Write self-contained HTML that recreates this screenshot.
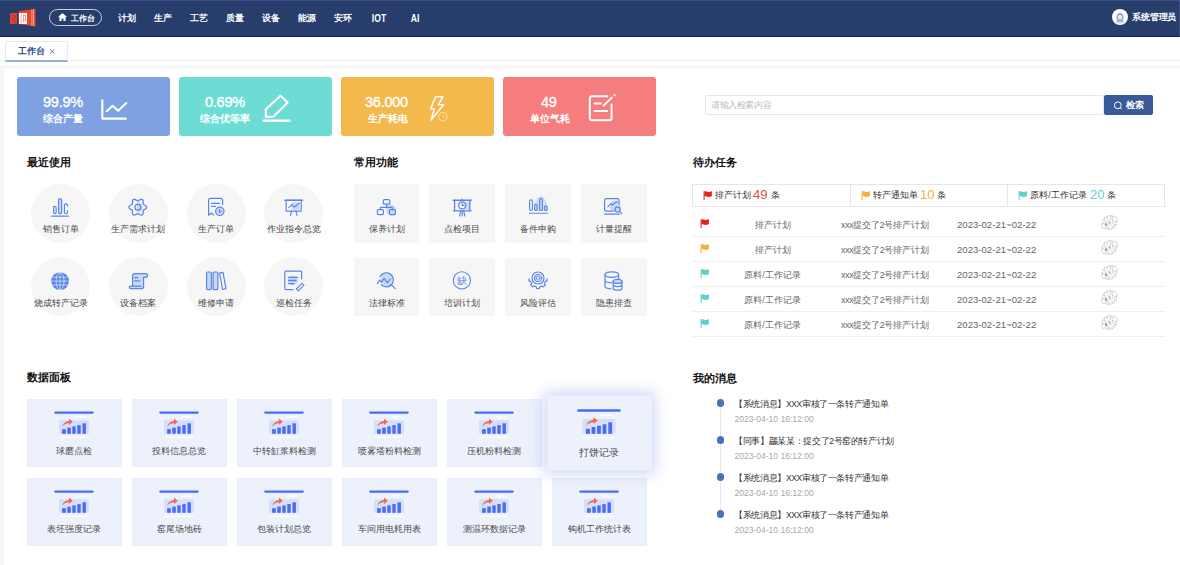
<!DOCTYPE html>
<html><head><meta charset="utf-8">
<style>
*{box-sizing:border-box;margin:0;padding:0}
html,body{width:1180px;height:565px;overflow:hidden;background:#f7f7f8;font-family:"Liberation Sans",sans-serif;color:#333}
.a{position:absolute;white-space:nowrap}
#hdr{position:absolute;left:0;top:0;width:1180px;height:37px;background:#273e6c;border-bottom:1px solid #0b1f4f;border-top:1px solid #3a5082;border-right:1px solid #3a5082}
.nav{position:absolute;top:11.2px;font-size:8.6px;font-weight:bold;color:#fff;line-height:12px;text-align:center;width:30px}
#tabs{position:absolute;left:0;top:37px;width:1180px;height:27.5px;background:#fff}
#panel{position:absolute;left:3.8px;top:68.8px;width:1180px;height:500px;background:#fff}
.stat{position:absolute;top:77px;width:153px;height:59px;border-radius:3px;color:#fff}
.stat .v{position:absolute;top:16px;font-size:14.5px;line-height:16px;-webkit-text-stroke:0.35px #fff;letter-spacing:-0.25px;transform:scaleY(1.06);transform-origin:0 0}
.stat .l{position:absolute;top:34.6px;font-size:10px;line-height:13px;font-weight:bold;margin-left:0.6px}
.h{position:absolute;font-size:11px;font-weight:bold;color:#111;line-height:14px}
.circ{position:absolute;width:59px;height:59px;border-radius:50%;background:#f6f6f6}
.sq{position:absolute;width:65.8px;height:58.6px;background:#f6f6f6}
.lbl{position:absolute;left:0;right:-20px;margin-left:-10px;top:40px;font-size:9px;line-height:11px;color:#333;text-align:center;white-space:nowrap}
.ic{position:absolute;left:50%;top:14px;transform:translateX(-50%)}
.dc{position:absolute;width:94.7px;height:68.3px;background:#edf1fc;box-shadow:inset 0 0 0 0.5px #e6ebf9}
.dc .lbl{top:47px}
.t9{position:absolute;width:100px;text-align:center;font-size:9px;line-height:11px;color:#4a4a4a;white-space:nowrap}
.hov{transform:scale(1.1);box-shadow:0 0 12px 3px rgba(100,135,230,.32);z-index:2}
</style></head><body>
<div id="hdr">
  <svg class="a" style="left:9px;top:7px" width="28" height="20" viewBox="0 0 28 20">
    <rect x="1" y="5" width="7" height="11" fill="#e3412b"/>
    <polygon points="9.5,3.3 26.5,0.8 26.5,18.4 9.5,16" fill="#e8432c"/>
    <rect x="10" y="5" width="8" height="11" fill="#fff"/><g fill="#ee6a55"><rect x="11.8" y="6" width="0.6" height="9.5"/><rect x="14" y="7.4" width="2.6" height="0.6"/><rect x="14" y="11" width="2.4" height="0.6"/><rect x="14.4" y="7.4" width="0.6" height="7"/><rect x="16.2" y="7.4" width="0.6" height="6"/></g><g fill="#2b4170" opacity="0.9"><rect x="3.6" y="7" width="1.2" height="0.9"/><rect x="5.6" y="8.6" width="1" height="1.4"/><rect x="3" y="10.4" width="1.6" height="0.9"/><rect x="4.8" y="12.4" width="1" height="1.2"/><rect x="6.4" y="13.8" width="0.8" height="1"/></g>
    <rect x="22.5" y="1.5" width="0.8" height="16.5" fill="#f7b7a8"/>
    <rect x="24.2" y="1.3" width="0.8" height="16.8" fill="#f7b7a8"/>
  </svg>
  <div class="a" style="left:49px;top:8.2px;width:53px;height:17px;border:1.5px solid #c9d0de;border-radius:9px"></div>
  <svg class="a" style="left:58px;top:12.3px" width="9" height="8" viewBox="0 0 9 8"><path d="M4.5 0 L9 4 L7.6 4 L7.6 8 L5.4 8 L5.4 5.5 L3.6 5.5 L3.6 8 L1.4 8 L1.4 4 L0 4 Z" fill="#fff"/></svg>
  <div class="nav" style="left:67.5px;width:30px;font-size:8px;top:11.5px">工作台</div>
  <div class="nav" style="left:112px">计划</div>
  <div class="nav" style="left:148px">生产</div>
  <div class="nav" style="left:184px">工艺</div>
  <div class="nav" style="left:220px">质量</div>
  <div class="nav" style="left:256px">设备</div>
  <div class="nav" style="left:292px">能源</div>
  <div class="nav" style="left:328px">安环</div>
  <div class="nav" style="left:364px;top:12.2px;transform:scaleY(1.22);transform-origin:50% 75%">IOT</div>
  <div class="nav" style="left:400px;top:12.2px;transform:scaleY(1.22);transform-origin:50% 75%">AI</div>
  <svg class="a" style="left:1112px;top:8px" width="16" height="16" viewBox="0 0 16 16"><circle cx="8" cy="8" r="8" fill="#fff"/><path d="M4.6 13.6 Q4.2 6.6 5 5 Q8 2 11 5 Q11.8 6.6 11.4 13.6 Z" fill="#7cc0ee"/><circle cx="8" cy="8.2" r="2.6" fill="#f6e7dc" stroke="#8a7b72" stroke-width="0.5"/><path d="M5 15 Q8 11.2 11 15" fill="#d9ecfa"/></svg>
  <div class="a" style="left:1132.3px;top:10.2px;letter-spacing:-0.25px;font-size:8.6px;line-height:12px;color:#fff;font-weight:bold">系统管理员</div>
</div>
<div id="tabs">
  <div class="a" style="left:0;top:23.3px;width:1180px;height:1px;background:#ececec"></div><div class="a" style="left:5px;top:4px;width:63px;height:21px;border:1px solid #e6e9ef;border-bottom:2px solid #8fb0df;border-radius:2px 2px 0 0;background:#fff"></div>
  <div class="a" style="left:18px;top:9px;font-size:9px;line-height:11px;color:#1f4e8c;font-weight:bold">工作台</div>
  <svg class="a" style="left:49px;top:10.6px" width="7" height="7" viewBox="0 0 7 7"><path d="M1 1.2 L5.6 5.6 M5.6 1.2 L1 5.6" stroke="#4a6a9a" stroke-width="0.85"/></svg>
</div>
<div id="panel"></div>
<div class="stat" style="left:17px;background:#7ea1e2"><div class="v" style="left:26px">99.9%</div><div class="l" style="left:25px">综合产量</div></div>
<div class="stat" style="left:179px;background:#6cdcd4"><div class="v" style="left:26px">0.69%</div><div class="l" style="left:20px">综合优等率</div></div>
<div class="stat" style="left:341px;background:#f4b94c"><div class="v" style="left:24px">36.000</div><div class="l" style="left:26px">生产耗电</div></div>
<div class="stat" style="left:503px;background:#f57d7d"><div class="v" style="left:38px">49</div><div class="l" style="left:26px">单位气耗</div></div>

<div class="circ" style="left:31.25px;top:183.95px"></div>
<div class="t9" style="left:10.50px;top:224.3px">销售订单</div>
<div class="circ" style="left:108.95px;top:183.95px"></div>
<div class="t9" style="left:88.20px;top:224.3px">生产需求计划</div>
<div class="circ" style="left:186.55px;top:183.95px"></div>
<div class="t9" style="left:165.80px;top:224.3px">生产订单</div>
<div class="circ" style="left:264.25px;top:183.95px"></div>
<div class="t9" style="left:243.50px;top:224.3px">作业指令总览</div>
<div class="circ" style="left:31.25px;top:257.45px"></div>
<div class="t9" style="left:10.50px;top:297.5px">烧成转产记录</div>
<div class="circ" style="left:108.95px;top:257.45px"></div>
<div class="t9" style="left:88.20px;top:297.5px">设备档案</div>
<div class="circ" style="left:186.55px;top:257.45px"></div>
<div class="t9" style="left:165.80px;top:297.5px">维修申请</div>
<div class="circ" style="left:264.25px;top:257.45px"></div>
<div class="t9" style="left:243.50px;top:297.5px">巡检任务</div>
<div class="sq" style="left:353.6px;top:184px"></div>
<div class="t9" style="left:336.50px;top:224.3px">保养计划</div>
<div class="sq" style="left:429.3px;top:184px"></div>
<div class="t9" style="left:412.10px;top:224.3px">点检项目</div>
<div class="sq" style="left:505px;top:184px"></div>
<div class="t9" style="left:487.70px;top:224.3px">备件申购</div>
<div class="sq" style="left:581.2px;top:184px"></div>
<div class="t9" style="left:564.3px;top:224.3px">计量提醒</div>
<div class="sq" style="left:353.6px;top:257.6px"></div>
<div class="t9" style="left:336.50px;top:297.5px">法律标准</div>
<div class="sq" style="left:429.3px;top:257.6px"></div>
<div class="t9" style="left:412.10px;top:297.5px">培训计划</div>
<div class="sq" style="left:505px;top:257.6px"></div>
<div class="t9" style="left:487.70px;top:297.5px">风险评估</div>
<div class="sq" style="left:581.2px;top:257.6px"></div>
<div class="t9" style="left:564.3px;top:297.5px">隐患排查</div>
<div class="dc" style="left:27px;top:399px"><svg style="position:absolute;left:0;top:0" width="95" height="69" viewBox="0 0 95 69"><path d="M28.3 13.6 H65.7" stroke="#4a6cf0" stroke-width="2.2" stroke-linecap="round"/><path d="M49 18 H59.6" stroke="#fff" stroke-width="1.2"/><rect x="32" y="21.2" width="30" height="13.6" rx="1" fill="#d5dffb"/><g fill="#4a6cf0"><rect x="35.1" y="30.2" width="3.7" height="4.6"/><rect x="40.3" y="28.6" width="3.5" height="6.2"/><rect x="45.3" y="27.4" width="3.4" height="7.4"/><rect x="50.3" y="26.1" width="3.4" height="8.7"/><rect x="55.5" y="24.3" width="3.4" height="10.5"/></g><path d="M35.2 27.6 Q36.8 22.6 42 22 L42 19.4 L45.8 22.7 L42 25.9 L42 24.2 Q38 24.2 35.2 27.6 Z" fill="#f26b50"/><path d="M32.9 38.2 H60.8" stroke="#fff" stroke-width="1.3"/></svg><div class="t9" style="left:-3px;top:46.5px;width:100px">球磨点检</div></div>
<div class="dc" style="left:132px;top:399px"><svg style="position:absolute;left:0;top:0" width="95" height="69" viewBox="0 0 95 69"><path d="M28.3 13.6 H65.7" stroke="#4a6cf0" stroke-width="2.2" stroke-linecap="round"/><path d="M49 18 H59.6" stroke="#fff" stroke-width="1.2"/><rect x="32" y="21.2" width="30" height="13.6" rx="1" fill="#d5dffb"/><g fill="#4a6cf0"><rect x="35.1" y="30.2" width="3.7" height="4.6"/><rect x="40.3" y="28.6" width="3.5" height="6.2"/><rect x="45.3" y="27.4" width="3.4" height="7.4"/><rect x="50.3" y="26.1" width="3.4" height="8.7"/><rect x="55.5" y="24.3" width="3.4" height="10.5"/></g><path d="M35.2 27.6 Q36.8 22.6 42 22 L42 19.4 L45.8 22.7 L42 25.9 L42 24.2 Q38 24.2 35.2 27.6 Z" fill="#f26b50"/><path d="M32.9 38.2 H60.8" stroke="#fff" stroke-width="1.3"/></svg><div class="t9" style="left:-3px;top:46.5px;width:100px">投料信息总览</div></div>
<div class="dc" style="left:237px;top:399px"><svg style="position:absolute;left:0;top:0" width="95" height="69" viewBox="0 0 95 69"><path d="M28.3 13.6 H65.7" stroke="#4a6cf0" stroke-width="2.2" stroke-linecap="round"/><path d="M49 18 H59.6" stroke="#fff" stroke-width="1.2"/><rect x="32" y="21.2" width="30" height="13.6" rx="1" fill="#d5dffb"/><g fill="#4a6cf0"><rect x="35.1" y="30.2" width="3.7" height="4.6"/><rect x="40.3" y="28.6" width="3.5" height="6.2"/><rect x="45.3" y="27.4" width="3.4" height="7.4"/><rect x="50.3" y="26.1" width="3.4" height="8.7"/><rect x="55.5" y="24.3" width="3.4" height="10.5"/></g><path d="M35.2 27.6 Q36.8 22.6 42 22 L42 19.4 L45.8 22.7 L42 25.9 L42 24.2 Q38 24.2 35.2 27.6 Z" fill="#f26b50"/><path d="M32.9 38.2 H60.8" stroke="#fff" stroke-width="1.3"/></svg><div class="t9" style="left:-3px;top:46.5px;width:100px">中转缸浆料检测</div></div>
<div class="dc" style="left:342px;top:399px"><svg style="position:absolute;left:0;top:0" width="95" height="69" viewBox="0 0 95 69"><path d="M28.3 13.6 H65.7" stroke="#4a6cf0" stroke-width="2.2" stroke-linecap="round"/><path d="M49 18 H59.6" stroke="#fff" stroke-width="1.2"/><rect x="32" y="21.2" width="30" height="13.6" rx="1" fill="#d5dffb"/><g fill="#4a6cf0"><rect x="35.1" y="30.2" width="3.7" height="4.6"/><rect x="40.3" y="28.6" width="3.5" height="6.2"/><rect x="45.3" y="27.4" width="3.4" height="7.4"/><rect x="50.3" y="26.1" width="3.4" height="8.7"/><rect x="55.5" y="24.3" width="3.4" height="10.5"/></g><path d="M35.2 27.6 Q36.8 22.6 42 22 L42 19.4 L45.8 22.7 L42 25.9 L42 24.2 Q38 24.2 35.2 27.6 Z" fill="#f26b50"/><path d="M32.9 38.2 H60.8" stroke="#fff" stroke-width="1.3"/></svg><div class="t9" style="left:-3px;top:46.5px;width:100px">喷雾塔粉料检测</div></div>
<div class="dc" style="left:447px;top:399px"><svg style="position:absolute;left:0;top:0" width="95" height="69" viewBox="0 0 95 69"><path d="M28.3 13.6 H65.7" stroke="#4a6cf0" stroke-width="2.2" stroke-linecap="round"/><path d="M49 18 H59.6" stroke="#fff" stroke-width="1.2"/><rect x="32" y="21.2" width="30" height="13.6" rx="1" fill="#d5dffb"/><g fill="#4a6cf0"><rect x="35.1" y="30.2" width="3.7" height="4.6"/><rect x="40.3" y="28.6" width="3.5" height="6.2"/><rect x="45.3" y="27.4" width="3.4" height="7.4"/><rect x="50.3" y="26.1" width="3.4" height="8.7"/><rect x="55.5" y="24.3" width="3.4" height="10.5"/></g><path d="M35.2 27.6 Q36.8 22.6 42 22 L42 19.4 L45.8 22.7 L42 25.9 L42 24.2 Q38 24.2 35.2 27.6 Z" fill="#f26b50"/><path d="M32.9 38.2 H60.8" stroke="#fff" stroke-width="1.3"/></svg><div class="t9" style="left:-3px;top:46.5px;width:100px">压机粉料检测</div></div>
<div class="dc hov" style="left:552px;top:399px"><svg style="position:absolute;left:0;top:0" width="95" height="69" viewBox="0 0 95 69"><path d="M28.3 13.6 H65.7" stroke="#4a6cf0" stroke-width="2.2" stroke-linecap="round"/><path d="M49 18 H59.6" stroke="#fff" stroke-width="1.2"/><rect x="32" y="21.2" width="30" height="13.6" rx="1" fill="#d5dffb"/><g fill="#4a6cf0"><rect x="35.1" y="30.2" width="3.7" height="4.6"/><rect x="40.3" y="28.6" width="3.5" height="6.2"/><rect x="45.3" y="27.4" width="3.4" height="7.4"/><rect x="50.3" y="26.1" width="3.4" height="8.7"/><rect x="55.5" y="24.3" width="3.4" height="10.5"/></g><path d="M35.2 27.6 Q36.8 22.6 42 22 L42 19.4 L45.8 22.7 L42 25.9 L42 24.2 Q38 24.2 35.2 27.6 Z" fill="#f26b50"/><path d="M32.9 38.2 H60.8" stroke="#fff" stroke-width="1.3"/></svg><div class="t9" style="left:-3px;top:46.5px;width:100px">打饼记录</div></div>
<div class="dc" style="left:27px;top:477.5px"><svg style="position:absolute;left:0;top:0" width="95" height="69" viewBox="0 0 95 69"><path d="M28.3 13.6 H65.7" stroke="#4a6cf0" stroke-width="2.2" stroke-linecap="round"/><path d="M49 18 H59.6" stroke="#fff" stroke-width="1.2"/><rect x="32" y="21.2" width="30" height="13.6" rx="1" fill="#d5dffb"/><g fill="#4a6cf0"><rect x="35.1" y="30.2" width="3.7" height="4.6"/><rect x="40.3" y="28.6" width="3.5" height="6.2"/><rect x="45.3" y="27.4" width="3.4" height="7.4"/><rect x="50.3" y="26.1" width="3.4" height="8.7"/><rect x="55.5" y="24.3" width="3.4" height="10.5"/></g><path d="M35.2 27.6 Q36.8 22.6 42 22 L42 19.4 L45.8 22.7 L42 25.9 L42 24.2 Q38 24.2 35.2 27.6 Z" fill="#f26b50"/><path d="M32.9 38.2 H60.8" stroke="#fff" stroke-width="1.3"/></svg><div class="t9" style="left:-3px;top:46.5px;width:100px">表坯强度记录</div></div>
<div class="dc" style="left:132px;top:477.5px"><svg style="position:absolute;left:0;top:0" width="95" height="69" viewBox="0 0 95 69"><path d="M28.3 13.6 H65.7" stroke="#4a6cf0" stroke-width="2.2" stroke-linecap="round"/><path d="M49 18 H59.6" stroke="#fff" stroke-width="1.2"/><rect x="32" y="21.2" width="30" height="13.6" rx="1" fill="#d5dffb"/><g fill="#4a6cf0"><rect x="35.1" y="30.2" width="3.7" height="4.6"/><rect x="40.3" y="28.6" width="3.5" height="6.2"/><rect x="45.3" y="27.4" width="3.4" height="7.4"/><rect x="50.3" y="26.1" width="3.4" height="8.7"/><rect x="55.5" y="24.3" width="3.4" height="10.5"/></g><path d="M35.2 27.6 Q36.8 22.6 42 22 L42 19.4 L45.8 22.7 L42 25.9 L42 24.2 Q38 24.2 35.2 27.6 Z" fill="#f26b50"/><path d="M32.9 38.2 H60.8" stroke="#fff" stroke-width="1.3"/></svg><div class="t9" style="left:-3px;top:46.5px;width:100px">窑尾场地砖</div></div>
<div class="dc" style="left:237px;top:477.5px"><svg style="position:absolute;left:0;top:0" width="95" height="69" viewBox="0 0 95 69"><path d="M28.3 13.6 H65.7" stroke="#4a6cf0" stroke-width="2.2" stroke-linecap="round"/><path d="M49 18 H59.6" stroke="#fff" stroke-width="1.2"/><rect x="32" y="21.2" width="30" height="13.6" rx="1" fill="#d5dffb"/><g fill="#4a6cf0"><rect x="35.1" y="30.2" width="3.7" height="4.6"/><rect x="40.3" y="28.6" width="3.5" height="6.2"/><rect x="45.3" y="27.4" width="3.4" height="7.4"/><rect x="50.3" y="26.1" width="3.4" height="8.7"/><rect x="55.5" y="24.3" width="3.4" height="10.5"/></g><path d="M35.2 27.6 Q36.8 22.6 42 22 L42 19.4 L45.8 22.7 L42 25.9 L42 24.2 Q38 24.2 35.2 27.6 Z" fill="#f26b50"/><path d="M32.9 38.2 H60.8" stroke="#fff" stroke-width="1.3"/></svg><div class="t9" style="left:-3px;top:46.5px;width:100px">包装计划总览</div></div>
<div class="dc" style="left:342px;top:477.5px"><svg style="position:absolute;left:0;top:0" width="95" height="69" viewBox="0 0 95 69"><path d="M28.3 13.6 H65.7" stroke="#4a6cf0" stroke-width="2.2" stroke-linecap="round"/><path d="M49 18 H59.6" stroke="#fff" stroke-width="1.2"/><rect x="32" y="21.2" width="30" height="13.6" rx="1" fill="#d5dffb"/><g fill="#4a6cf0"><rect x="35.1" y="30.2" width="3.7" height="4.6"/><rect x="40.3" y="28.6" width="3.5" height="6.2"/><rect x="45.3" y="27.4" width="3.4" height="7.4"/><rect x="50.3" y="26.1" width="3.4" height="8.7"/><rect x="55.5" y="24.3" width="3.4" height="10.5"/></g><path d="M35.2 27.6 Q36.8 22.6 42 22 L42 19.4 L45.8 22.7 L42 25.9 L42 24.2 Q38 24.2 35.2 27.6 Z" fill="#f26b50"/><path d="M32.9 38.2 H60.8" stroke="#fff" stroke-width="1.3"/></svg><div class="t9" style="left:-3px;top:46.5px;width:100px">车间用电耗用表</div></div>
<div class="dc" style="left:447px;top:477.5px"><svg style="position:absolute;left:0;top:0" width="95" height="69" viewBox="0 0 95 69"><path d="M28.3 13.6 H65.7" stroke="#4a6cf0" stroke-width="2.2" stroke-linecap="round"/><path d="M49 18 H59.6" stroke="#fff" stroke-width="1.2"/><rect x="32" y="21.2" width="30" height="13.6" rx="1" fill="#d5dffb"/><g fill="#4a6cf0"><rect x="35.1" y="30.2" width="3.7" height="4.6"/><rect x="40.3" y="28.6" width="3.5" height="6.2"/><rect x="45.3" y="27.4" width="3.4" height="7.4"/><rect x="50.3" y="26.1" width="3.4" height="8.7"/><rect x="55.5" y="24.3" width="3.4" height="10.5"/></g><path d="M35.2 27.6 Q36.8 22.6 42 22 L42 19.4 L45.8 22.7 L42 25.9 L42 24.2 Q38 24.2 35.2 27.6 Z" fill="#f26b50"/><path d="M32.9 38.2 H60.8" stroke="#fff" stroke-width="1.3"/></svg><div class="t9" style="left:-3px;top:46.5px;width:100px">测温环数据记录</div></div>
<div class="dc" style="left:552px;top:477.5px"><svg style="position:absolute;left:0;top:0" width="95" height="69" viewBox="0 0 95 69"><path d="M28.3 13.6 H65.7" stroke="#4a6cf0" stroke-width="2.2" stroke-linecap="round"/><path d="M49 18 H59.6" stroke="#fff" stroke-width="1.2"/><rect x="32" y="21.2" width="30" height="13.6" rx="1" fill="#d5dffb"/><g fill="#4a6cf0"><rect x="35.1" y="30.2" width="3.7" height="4.6"/><rect x="40.3" y="28.6" width="3.5" height="6.2"/><rect x="45.3" y="27.4" width="3.4" height="7.4"/><rect x="50.3" y="26.1" width="3.4" height="8.7"/><rect x="55.5" y="24.3" width="3.4" height="10.5"/></g><path d="M35.2 27.6 Q36.8 22.6 42 22 L42 19.4 L45.8 22.7 L42 25.9 L42 24.2 Q38 24.2 35.2 27.6 Z" fill="#f26b50"/><path d="M32.9 38.2 H60.8" stroke="#fff" stroke-width="1.3"/></svg><div class="t9" style="left:-3px;top:46.5px;width:100px">钩机工作统计表</div></div>
<div class="h" style="left:27px;top:155px">最近使用</div>
<div class="h" style="left:354px;top:155px">常用功能</div>
<div class="h" style="left:693px;top:155px">待办任务</div>
<div class="h" style="left:27px;top:370px">数据面板</div>
<div class="h" style="left:693px;top:370.5px">我的消息</div>
<div class="a" style="left:704.5px;top:95px;width:399px;height:19.5px;border:1px solid #e4e7ed;border-radius:2px;background:#fff"></div>
<div class="a" style="left:711px;top:99.8px;letter-spacing:-0.4px;font-size:8.5px;line-height:11px;color:#b8bcc4">请输入检索内容</div>
<div class="a" style="left:1104px;top:95px;width:49px;height:19.5px;border-radius:2px;background:#3b5a9a"></div>
<svg class="a" style="left:1112px;top:100px" width="12" height="12" viewBox="0 0 12 12"><circle cx="5.8" cy="5.3" r="3.4" fill="none" stroke="#fff" stroke-width="1"/><line x1="8.3" y1="7.8" x2="9.6" y2="9.1" stroke="#fff" stroke-width="1"/></svg>
<div class="a" style="left:1126px;top:99.5px;font-size:8.7px;line-height:11px;color:#fff;font-weight:bold">检索</div>
<div class="a" style="left:692px;top:184px;width:473px;height:22.5px;border:1px solid #e6e6e6"></div>
<div class="a" style="left:849.8px;top:184px;width:1px;height:22.5px;background:#e6e6e6"></div>
<div class="a" style="left:1006.8px;top:184px;width:1px;height:22.5px;background:#e6e6e6"></div>
<svg class="a" style="left:702.5px;top:190.5px" width="10" height="10" viewBox="0 0 10 10"><path d="M0.6 0.3 L1.6 0.3 L1.6 9.3 L0.6 9.3 Z" fill="#e3231c"/><path d="M1.4 0.6 C3 -0.2 4.4 1.4 6.2 0.9 C7.2 0.6 8 0.4 8.9 0.3 L8.9 5.2 C8 5.3 7.2 5.6 6.2 5.9 C4.4 6.4 3 4.8 1.4 5.6 Z" fill="#e3231c"/></svg>
<div class="a" style="left:714.8px;top:190px;font-size:8.7px;line-height:11px;color:#333">排产计划</div>
<div class="a" style="left:753px;top:188px;font-size:13px;line-height:14px;color:#ea4b3c">49</div>
<div class="a" style="left:771.3px;top:190px;font-size:8.7px;line-height:11px;color:#333">条</div>
<svg class="a" style="left:860.5px;top:190.5px" width="10" height="10" viewBox="0 0 10 10"><path d="M0.6 0.3 L1.6 0.3 L1.6 9.3 L0.6 9.3 Z" fill="#f5b040"/><path d="M1.4 0.6 C3 -0.2 4.4 1.4 6.2 0.9 C7.2 0.6 8 0.4 8.9 0.3 L8.9 5.2 C8 5.3 7.2 5.6 6.2 5.9 C4.4 6.4 3 4.8 1.4 5.6 Z" fill="#f5b040"/></svg>
<div class="a" style="left:873px;top:190px;font-size:8.7px;line-height:11px;color:#333">转产通知单</div>
<div class="a" style="left:920px;top:188px;font-size:13px;line-height:14px;color:#f5b040">10</div>
<div class="a" style="left:937.4px;top:190px;font-size:8.7px;line-height:11px;color:#333">条</div>
<svg class="a" style="left:1018px;top:190.5px" width="10" height="10" viewBox="0 0 10 10"><path d="M0.6 0.3 L1.6 0.3 L1.6 9.3 L0.6 9.3 Z" fill="#5ccfcf"/><path d="M1.4 0.6 C3 -0.2 4.4 1.4 6.2 0.9 C7.2 0.6 8 0.4 8.9 0.3 L8.9 5.2 C8 5.3 7.2 5.6 6.2 5.9 C4.4 6.4 3 4.8 1.4 5.6 Z" fill="#5ccfcf"/></svg>
<div class="a" style="left:1030.2px;top:190px;font-size:8.7px;line-height:11px;color:#333">原料/工作记录</div>
<div class="a" style="left:1090px;top:188px;font-size:13px;line-height:14px;color:#5ccfcf">20</div>
<div class="a" style="left:1107.4px;top:190px;font-size:8.7px;line-height:11px;color:#333">条</div>
<svg class="a" style="left:699.5px;top:218.5px" width="10" height="10" viewBox="0 0 10 10"><path d="M0.6 0.3 L1.6 0.3 L1.6 9.3 L0.6 9.3 Z" fill="#e3231c"/><path d="M1.4 0.6 C3 -0.2 4.4 1.4 6.2 0.9 C7.2 0.6 8 0.4 8.9 0.3 L8.9 5.2 C8 5.3 7.2 5.6 6.2 5.9 C4.4 6.4 3 4.8 1.4 5.6 Z" fill="#e3231c"/></svg>
<div class="a" style="left:722.5px;top:219.8px;width:100px;text-align:center;font-size:8.7px;line-height:11px;color:#666">排产计划</div>
<div class="a" style="left:841px;top:219.8px;font-size:8.7px;letter-spacing:-0.2px;line-height:11px;color:#666">xxx提交了2号排产计划</div>
<div class="a" style="left:957px;top:218.6px;font-size:9.6px;line-height:11px;color:#666">2023-02-21~02-22</div>
<div class="a" style="left:692px;top:236.0px;width:473px;height:1px;background:#efefef"></div>
<svg class="a" style="left:1100.8px;top:214.2px" width="17" height="17" viewBox="0 0 17 17"><g transform="translate(8.5 8.5) rotate(-32)"><ellipse cx="0" cy="0" rx="7.3" ry="6.6" fill="none" stroke="#bdbdbd" stroke-width="1" stroke-dasharray="2 0.7"/><g fill="#d0d0d0"><circle cx="-3" cy="-4.2" r="0.9"/><circle cx="0.5" cy="-4.8" r="0.9"/><circle cx="3.6" cy="-3.8" r="0.9"/><circle cx="-3.4" cy="4" r="0.9"/><circle cx="0" cy="4.8" r="0.9"/><circle cx="3.2" cy="4.2" r="0.9"/></g><rect x="-8.6" y="-2.1" width="17.2" height="4.2" fill="#fff" stroke="#c2c2c2" stroke-width="0.8" stroke-dasharray="1.5 0.6"/><circle cx="-4" cy="0" r="1.5" fill="#a9a9a9"/><circle cx="0.2" cy="0" r="1.2" fill="#b4b4b4"/><circle cx="3.8" cy="0" r="1" fill="#c4c4c4"/></g></svg>
<svg class="a" style="left:699.5px;top:243.5px" width="10" height="10" viewBox="0 0 10 10"><path d="M0.6 0.3 L1.6 0.3 L1.6 9.3 L0.6 9.3 Z" fill="#f5b040"/><path d="M1.4 0.6 C3 -0.2 4.4 1.4 6.2 0.9 C7.2 0.6 8 0.4 8.9 0.3 L8.9 5.2 C8 5.3 7.2 5.6 6.2 5.9 C4.4 6.4 3 4.8 1.4 5.6 Z" fill="#f5b040"/></svg>
<div class="a" style="left:722.5px;top:244.8px;width:100px;text-align:center;font-size:8.7px;line-height:11px;color:#666">排产计划</div>
<div class="a" style="left:841px;top:244.8px;font-size:8.7px;letter-spacing:-0.2px;line-height:11px;color:#666">xxx提交了2号排产计划</div>
<div class="a" style="left:957px;top:243.6px;font-size:9.6px;line-height:11px;color:#666">2023-02-21~02-22</div>
<div class="a" style="left:692px;top:261.0px;width:473px;height:1px;background:#efefef"></div>
<svg class="a" style="left:1100.8px;top:239.2px" width="17" height="17" viewBox="0 0 17 17"><g transform="translate(8.5 8.5) rotate(-32)"><ellipse cx="0" cy="0" rx="7.3" ry="6.6" fill="none" stroke="#bdbdbd" stroke-width="1" stroke-dasharray="2 0.7"/><g fill="#d0d0d0"><circle cx="-3" cy="-4.2" r="0.9"/><circle cx="0.5" cy="-4.8" r="0.9"/><circle cx="3.6" cy="-3.8" r="0.9"/><circle cx="-3.4" cy="4" r="0.9"/><circle cx="0" cy="4.8" r="0.9"/><circle cx="3.2" cy="4.2" r="0.9"/></g><rect x="-8.6" y="-2.1" width="17.2" height="4.2" fill="#fff" stroke="#c2c2c2" stroke-width="0.8" stroke-dasharray="1.5 0.6"/><circle cx="-4" cy="0" r="1.5" fill="#a9a9a9"/><circle cx="0.2" cy="0" r="1.2" fill="#b4b4b4"/><circle cx="3.8" cy="0" r="1" fill="#c4c4c4"/></g></svg>
<svg class="a" style="left:699.5px;top:268.5px" width="10" height="10" viewBox="0 0 10 10"><path d="M0.6 0.3 L1.6 0.3 L1.6 9.3 L0.6 9.3 Z" fill="#5ccfcf"/><path d="M1.4 0.6 C3 -0.2 4.4 1.4 6.2 0.9 C7.2 0.6 8 0.4 8.9 0.3 L8.9 5.2 C8 5.3 7.2 5.6 6.2 5.9 C4.4 6.4 3 4.8 1.4 5.6 Z" fill="#5ccfcf"/></svg>
<div class="a" style="left:722.5px;top:269.8px;width:100px;text-align:center;font-size:8.7px;line-height:11px;color:#666">原料/工作记录</div>
<div class="a" style="left:841px;top:269.8px;font-size:8.7px;letter-spacing:-0.2px;line-height:11px;color:#666">xxx提交了2号排产计划</div>
<div class="a" style="left:957px;top:268.6px;font-size:9.6px;line-height:11px;color:#666">2023-02-21~02-22</div>
<div class="a" style="left:692px;top:286.0px;width:473px;height:1px;background:#efefef"></div>
<svg class="a" style="left:1100.8px;top:264.2px" width="17" height="17" viewBox="0 0 17 17"><g transform="translate(8.5 8.5) rotate(-32)"><ellipse cx="0" cy="0" rx="7.3" ry="6.6" fill="none" stroke="#bdbdbd" stroke-width="1" stroke-dasharray="2 0.7"/><g fill="#d0d0d0"><circle cx="-3" cy="-4.2" r="0.9"/><circle cx="0.5" cy="-4.8" r="0.9"/><circle cx="3.6" cy="-3.8" r="0.9"/><circle cx="-3.4" cy="4" r="0.9"/><circle cx="0" cy="4.8" r="0.9"/><circle cx="3.2" cy="4.2" r="0.9"/></g><rect x="-8.6" y="-2.1" width="17.2" height="4.2" fill="#fff" stroke="#c2c2c2" stroke-width="0.8" stroke-dasharray="1.5 0.6"/><circle cx="-4" cy="0" r="1.5" fill="#a9a9a9"/><circle cx="0.2" cy="0" r="1.2" fill="#b4b4b4"/><circle cx="3.8" cy="0" r="1" fill="#c4c4c4"/></g></svg>
<svg class="a" style="left:699.5px;top:293.5px" width="10" height="10" viewBox="0 0 10 10"><path d="M0.6 0.3 L1.6 0.3 L1.6 9.3 L0.6 9.3 Z" fill="#5ccfcf"/><path d="M1.4 0.6 C3 -0.2 4.4 1.4 6.2 0.9 C7.2 0.6 8 0.4 8.9 0.3 L8.9 5.2 C8 5.3 7.2 5.6 6.2 5.9 C4.4 6.4 3 4.8 1.4 5.6 Z" fill="#5ccfcf"/></svg>
<div class="a" style="left:722.5px;top:294.8px;width:100px;text-align:center;font-size:8.7px;line-height:11px;color:#666">原料/工作记录</div>
<div class="a" style="left:841px;top:294.8px;font-size:8.7px;letter-spacing:-0.2px;line-height:11px;color:#666">xxx提交了2号排产计划</div>
<div class="a" style="left:957px;top:293.6px;font-size:9.6px;line-height:11px;color:#666">2023-02-21~02-22</div>
<div class="a" style="left:692px;top:311.0px;width:473px;height:1px;background:#efefef"></div>
<svg class="a" style="left:1100.8px;top:289.2px" width="17" height="17" viewBox="0 0 17 17"><g transform="translate(8.5 8.5) rotate(-32)"><ellipse cx="0" cy="0" rx="7.3" ry="6.6" fill="none" stroke="#bdbdbd" stroke-width="1" stroke-dasharray="2 0.7"/><g fill="#d0d0d0"><circle cx="-3" cy="-4.2" r="0.9"/><circle cx="0.5" cy="-4.8" r="0.9"/><circle cx="3.6" cy="-3.8" r="0.9"/><circle cx="-3.4" cy="4" r="0.9"/><circle cx="0" cy="4.8" r="0.9"/><circle cx="3.2" cy="4.2" r="0.9"/></g><rect x="-8.6" y="-2.1" width="17.2" height="4.2" fill="#fff" stroke="#c2c2c2" stroke-width="0.8" stroke-dasharray="1.5 0.6"/><circle cx="-4" cy="0" r="1.5" fill="#a9a9a9"/><circle cx="0.2" cy="0" r="1.2" fill="#b4b4b4"/><circle cx="3.8" cy="0" r="1" fill="#c4c4c4"/></g></svg>
<svg class="a" style="left:699.5px;top:318.5px" width="10" height="10" viewBox="0 0 10 10"><path d="M0.6 0.3 L1.6 0.3 L1.6 9.3 L0.6 9.3 Z" fill="#5ccfcf"/><path d="M1.4 0.6 C3 -0.2 4.4 1.4 6.2 0.9 C7.2 0.6 8 0.4 8.9 0.3 L8.9 5.2 C8 5.3 7.2 5.6 6.2 5.9 C4.4 6.4 3 4.8 1.4 5.6 Z" fill="#5ccfcf"/></svg>
<div class="a" style="left:722.5px;top:319.8px;width:100px;text-align:center;font-size:8.7px;line-height:11px;color:#666">原料/工作记录</div>
<div class="a" style="left:841px;top:319.8px;font-size:8.7px;letter-spacing:-0.2px;line-height:11px;color:#666">xxx提交了2号排产计划</div>
<div class="a" style="left:957px;top:318.6px;font-size:9.6px;line-height:11px;color:#666">2023-02-21~02-22</div>
<div class="a" style="left:692px;top:336.0px;width:473px;height:1px;background:#efefef"></div>
<svg class="a" style="left:1100.8px;top:314.2px" width="17" height="17" viewBox="0 0 17 17"><g transform="translate(8.5 8.5) rotate(-32)"><ellipse cx="0" cy="0" rx="7.3" ry="6.6" fill="none" stroke="#bdbdbd" stroke-width="1" stroke-dasharray="2 0.7"/><g fill="#d0d0d0"><circle cx="-3" cy="-4.2" r="0.9"/><circle cx="0.5" cy="-4.8" r="0.9"/><circle cx="3.6" cy="-3.8" r="0.9"/><circle cx="-3.4" cy="4" r="0.9"/><circle cx="0" cy="4.8" r="0.9"/><circle cx="3.2" cy="4.2" r="0.9"/></g><rect x="-8.6" y="-2.1" width="17.2" height="4.2" fill="#fff" stroke="#c2c2c2" stroke-width="0.8" stroke-dasharray="1.5 0.6"/><circle cx="-4" cy="0" r="1.5" fill="#a9a9a9"/><circle cx="0.2" cy="0" r="1.2" fill="#b4b4b4"/><circle cx="3.8" cy="0" r="1" fill="#c4c4c4"/></g></svg>
<div class="a" style="left:720px;top:404px;width:1px;height:111px;background:#e4e7ed"></div>
<div class="a" style="left:716.7px;top:399.45px;width:7.5px;height:7.5px;border-radius:50%;background:#4a70bd"></div>
<div class="a" style="left:734px;top:398.50px;font-size:8.5px;letter-spacing:-0.35px;line-height:11px;color:#333">【系统消息】XXX审核了一条转产通知单</div>
<div class="a" style="left:734.4px;top:413.70px;font-size:8.55px;line-height:11px;color:#a8a8a8">2023-04-10 16:12:00</div>
<div class="a" style="left:716.7px;top:436.45px;width:7.5px;height:7.5px;border-radius:50%;background:#4a70bd"></div>
<div class="a" style="left:734px;top:435.50px;font-size:8.5px;letter-spacing:-0.35px;line-height:11px;color:#333">【同事】龘某某：提交了2号窑的转产计划</div>
<div class="a" style="left:734.4px;top:450.70px;font-size:8.55px;line-height:11px;color:#a8a8a8">2023-04-10 16:12:00</div>
<div class="a" style="left:716.7px;top:473.45px;width:7.5px;height:7.5px;border-radius:50%;background:#4a70bd"></div>
<div class="a" style="left:734px;top:472.50px;font-size:8.5px;letter-spacing:-0.35px;line-height:11px;color:#333">【系统消息】XXX审核了一条转产通知单</div>
<div class="a" style="left:734.4px;top:487.70px;font-size:8.55px;line-height:11px;color:#a8a8a8">2023-04-10 16:12:00</div>
<div class="a" style="left:716.7px;top:510.45px;width:7.5px;height:7.5px;border-radius:50%;background:#4a70bd"></div>
<div class="a" style="left:734px;top:509.50px;font-size:8.5px;letter-spacing:-0.35px;line-height:11px;color:#333">【系统消息】XXX审核了一条转产通知单</div>
<div class="a" style="left:734.4px;top:524.70px;font-size:8.55px;line-height:11px;color:#a8a8a8">2023-04-10 16:12:00</div>
<svg class="a" style="left:0;top:0;z-index:1" width="1180" height="565" viewBox="0 0 1180 565">
<g fill="none" stroke="#fff" stroke-width="2.1" stroke-linecap="round" stroke-linejoin="round">
<path d="M102.3 99.5 V118.6 H126.5" stroke-linecap="butt"/>
<path d="M106.7 111.2 L112.6 105.8 L118.2 110.8 L126.3 103"/>
<path d="M265.8 116.8 V109.2 L280.5 95.8 L287.6 102.6 L273.4 116.8 Z"/>
<path d="M263.5 120.6 H289.6" stroke-width="2.3"/>
</g>
<path d="M435.6 96.7 H443 L438.3 104.8 H443.6 L431 120 L434.3 109 H430.6 Z" fill="none" stroke="#fff" stroke-width="1.4" stroke-linejoin="round"/>
<circle cx="442.9" cy="116.6" r="4.2" fill="none" stroke="#fff" stroke-opacity="0.55" stroke-width="1"/>
<path d="M442.4 114.6 L443.6 117.6" stroke="#fff" stroke-opacity="0.6" stroke-width="0.9"/>
<g fill="none" stroke="#fff" stroke-width="2" stroke-linecap="round" stroke-linejoin="round">
<path d="M607.3 96.2 H592 Q589.8 96.2 589.8 98.4 V118 Q589.8 120.2 592 120.2 H609.4 Q611.6 120.2 611.6 118 V104.5"/>
<path d="M594.6 103.6 H600.8 M594.6 111 H607.3 M603.6 105.6 L611.8 97.6"/>
</g><circle cx="614.6" cy="95.2" r="1.1" fill="#fff"/>
<g fill="none" stroke="#5a85e6" stroke-width="1.2" stroke-linecap="round" stroke-linejoin="round">
<rect x="53.6" y="206.4" width="2.5" height="7.2" rx="1"/><rect x="58.6" y="198.8" width="3" height="14.8" rx="1" fill="#c9d8f7"/>
<path d="M67.4 206 V205 Q67.4 203.8 66.2 203.8 Q64.4 203.8 64.4 205 V212.4 Q64.4 213.6 66.2 213.6 Q67.4 213.6 67.4 212.4 V210.5"/>
<path d="M51.8 216.2 H68.3" stroke-width="1.3"/>
<path d="M143.0 207.2 A5.2 5.2 0 0 0 136.8 202.1 L136.8 212.29999999999998 A5.2 5.2 0 0 0 143.0 207.2 Z" fill="#c9d8f7" stroke="none"/><path d="M146.65 207.20 L146.58 207.66 L146.36 208.10 L146.03 208.50 L145.61 208.86 L145.14 209.17 L144.66 209.43 L144.21 209.66 L143.82 209.88 L143.51 210.11 L143.30 210.38 L143.18 210.69 L143.13 211.07 L143.14 211.52 L143.16 212.03 L143.17 212.57 L143.14 213.13 L143.05 213.68 L142.86 214.17 L142.59 214.57 L142.23 214.86 L141.79 215.03 L141.30 215.07 L140.79 214.98 L140.27 214.80 L139.77 214.54 L139.30 214.26 L138.87 213.98 L138.49 213.75 L138.14 213.60 L137.80 213.55 L137.46 213.60 L137.11 213.75 L136.73 213.98 L136.30 214.26 L135.83 214.54 L135.33 214.80 L134.81 214.98 L134.30 215.07 L133.81 215.03 L133.38 214.86 L133.01 214.57 L132.74 214.17 L132.55 213.68 L132.46 213.13 L132.43 212.57 L132.44 212.03 L132.46 211.52 L132.47 211.07 L132.42 210.69 L132.30 210.38 L132.09 210.11 L131.78 209.88 L131.39 209.66 L130.94 209.43 L130.46 209.17 L129.99 208.86 L129.57 208.50 L129.24 208.10 L129.02 207.66 L128.95 207.20 L129.02 206.74 L129.24 206.30 L129.57 205.90 L129.99 205.54 L130.46 205.23 L130.94 204.97 L131.39 204.74 L131.78 204.52 L132.09 204.29 L132.30 204.02 L132.42 203.71 L132.47 203.33 L132.46 202.88 L132.44 202.37 L132.43 201.83 L132.46 201.27 L132.55 200.72 L132.74 200.23 L133.01 199.83 L133.38 199.54 L133.81 199.37 L134.30 199.33 L134.81 199.42 L135.33 199.60 L135.83 199.86 L136.30 200.14 L136.73 200.42 L137.11 200.65 L137.46 200.80 L137.80 200.85 L138.14 200.80 L138.49 200.65 L138.87 200.42 L139.30 200.14 L139.77 199.86 L140.27 199.60 L140.79 199.42 L141.30 199.33 L141.79 199.37 L142.23 199.54 L142.59 199.83 L142.86 200.23 L143.05 200.72 L143.14 201.27 L143.17 201.83 L143.16 202.37 L143.14 202.88 L143.13 203.33 L143.18 203.71 L143.30 204.02 L143.51 204.29 L143.82 204.52 L144.21 204.74 L144.66 204.97 L145.14 205.23 L145.61 205.54 L146.03 205.90 L146.36 206.30 L146.58 206.74 L146.65 207.20 Z" stroke-width="1.3"/><circle cx="137.8" cy="207.2" r="2.9" stroke-width="1.2"/>
<path d="M222.6 204.6 V200.4 Q222.6 198.4 220.6 198.4 H210.6 Q208.6 198.4 208.6 200.4 V215.2 L211.4 213 L213.6 215.2"/>
<path d="M211.6 203.3 H219.6 M211.6 206.4 H215.4"/>
<circle cx="219.8" cy="211.3" r="4.2" fill="#c9d8f7"/>
<path d="M219.4 209.5 V211.8 H221.2"/>
<path d="M284.8 200.3 H302.6" stroke-width="1.4"/>
<rect x="286.2" y="200.3" width="15" height="10.8" fill="#fff"/>
<rect x="291.5" y="202.3" width="8.3" height="7.5" fill="#c9d8f7" stroke="none"/>
<path d="M288.8 207.8 L291.6 204.6 L294.4 207 L299.2 203.2 M291.6 211.2 L290.5 215.3 M296 211.2 L297 215.3"/>
<circle cx="60.1" cy="281.1" r="8.9" fill="#5a85e6" stroke="none"/>
<g stroke="#fff" stroke-width="0.7" stroke-opacity="0.8" fill="none"><ellipse cx="60.1" cy="281.1" rx="4" ry="8.6"/><path d="M60.1 272.4 V289.8 M51.4 281.1 H68.8 M53 277.2 H67.2 M53 285 H67.2"/></g>
<path d="M132.6 286.2 V275.6 Q132.6 273.6 134.6 273.6 H145.4 Q147.6 273.6 147.6 275.6 Q147.6 277.4 145.6 277.4 H143.6 V286.4 Q143.6 288.6 141.6 288.6 H131 Q129.2 288.6 129.2 287.4 Q129.2 286.2 131 286.2 H141" fill="#c9d8f7"/>
<path d="M134.8 277.6 H137.6 M134.8 280.8 H139.8" stroke-width="1.3"/>
<rect x="206.6" y="272" width="4.8" height="17.6" rx="1" fill="#c9d8f7"/><rect x="213.1" y="272" width="4.8" height="17.6" rx="1" fill="#c9d8f7"/>
<path d="M219.6 273.2 L223 272.3 L226 288.6 L222.6 289.5 Z"/>
<path d="M301.6 279 V272.4 Q301.6 271.2 300.4 271.2 H286 Q284.8 271.2 284.8 272.4 V288.4 Q284.8 289.6 286 289.6 H293"/>
<circle cx="293" cy="280.5" r="5" fill="#c9d8f7" stroke="none"/>
<path d="M288.5 277.4 H297.6 M288.5 280.5 H296 M288.5 283.6 H293.6" stroke-width="1.3"/>
<path d="M296.4 289 L302 283.4 L304 285.2 L298.4 290.8 Z" stroke-width="1.1"/>
</g>
<g fill="none" stroke="#5a85e6" stroke-width="1.2" stroke-linecap="round" stroke-linejoin="round">
<circle cx="391" cy="210" r="5.2" fill="#c9d8f7" stroke="none"/>
<rect x="383.4" y="199.6" width="6.4" height="4.6" rx="1"/><rect x="377.4" y="209.6" width="6" height="5" rx="1"/><rect x="389.4" y="209.6" width="6" height="5" rx="1"/>
<path d="M386.6 204.4 V207.4 M380.4 209.4 V207.4 H392.4 V209.4"/>
<path d="M453.2 200.2 H471.2" stroke-width="1.4"/>
<path d="M454.6 200.2 V210.8 M469.8 200.2 V210.8 M453.2 210.8 H471.2" stroke-width="1.3"/>
<path d="M466.6 201.8 H469 V209.6 H463 Z" fill="#c9d8f7" stroke="none"/>
<circle cx="462.2" cy="205.4" r="3.5"/><path d="M462.2 203.4 V205.4 H464"/>
<path d="M462.2 199 V200 M460.6 211 L459.6 216 M462.2 211 V216 M463.8 211 L464.8 216"/>
<path d="M534 211 V203 Q538 194 543 197 Q548 202 548 211 Z" fill="#c9d8f7" stroke="none" opacity="0.8"/><rect x="529.6" y="199.9" width="2.8" height="10.6" rx="1.4" fill="#fff"/><rect x="534.6" y="204.4" width="2.6" height="6.1" rx="1.3"/><rect x="539.6" y="198.3" width="2.7" height="12.2" rx="1.35"/><rect x="544.5" y="205.9" width="2.5" height="4.6" rx="1.25"/><path d="M529.4 213.3 H547.6" stroke-width="1.1"/>
<circle cx="615" cy="206" r="5.6" fill="#c9d8f7" stroke="none"/>
<path d="M619 204 V200.4 Q619 198.6 617.2 198.6 H606.4 Q604.6 198.6 604.6 200.4 V209.6 Q604.6 211.2 606.4 211.2 H613.4"/>
<path d="M604.6 214.2 H619.6 M607.8 206.6 L611.2 203.6 L612.4 205 L617 201.6"/>
<circle cx="617.6" cy="209.4" r="2.6" fill="#c9d8f7"/><path d="M619.6 211.4 L621.8 213.6"/>
<circle cx="386.6" cy="280.1" r="6" fill="#c9d8f7" stroke="none"/>
<path d="M380.2 276.6 A7 7 0 1 1 381.2 284.6 M391.6 285.1 L395.2 288.6" stroke-width="1.25"/>
<path d="M377.4 283.6 L379.8 280 L381.4 282.2 L384.2 278.4 L387.4 282.8 L390.4 279"/>
<circle cx="461.9" cy="280.4" r="8.6" stroke-width="1.1"/>
<text x="462" y="284.4" font-size="10" text-anchor="middle" fill="#5a85e6" stroke="none" font-family="Liberation Sans,sans-serif">缺</text>
<path d="M546.97 278.82 L546.98 278.96 L546.99 279.11 L546.99 279.26 L547.00 279.41 L547.00 279.56 L547.00 279.71 L547.00 279.86 L546.99 280.01 L546.98 280.16 L546.97 280.31 L546.96 280.45 L546.94 280.60 L546.93 280.75 L546.91 280.90 L546.88 281.05 L546.53 281.13 L546.09 281.19 L545.65 281.24 L545.21 281.27 L545.18 281.39 L545.15 281.51 L545.12 281.63 L545.08 281.75 L545.05 281.86 L545.01 281.98 L544.97 282.09 L544.92 282.21 L544.88 282.32 L544.83 282.44 L544.79 282.55 L544.74 282.66 L544.68 282.77 L544.63 282.88 L544.58 282.99 L544.52 283.10 L544.46 283.21 L544.40 283.32 L544.34 283.42 L544.31 283.55 L544.60 283.88 L544.88 284.23 L545.14 284.58 L545.29 284.87 L545.21 284.99 L545.12 285.11 L545.02 285.23 L544.93 285.34 L544.83 285.46 L544.74 285.57 L544.64 285.68 L544.53 285.79 L544.43 285.90 L544.32 286.00 L544.22 286.11 L544.11 286.21 L544.00 286.31 L543.89 286.41 L543.77 286.50 L543.66 286.60 L543.54 286.69 L543.42 286.78 L543.30 286.87 L543.08 286.81 L542.72 286.55 L542.37 286.27 L542.04 285.99 L541.85 285.92 L541.74 285.98 L541.64 286.04 L541.53 286.10 L541.42 286.16 L541.31 286.22 L541.20 286.27 L541.09 286.32 L540.98 286.37 L540.87 286.42 L540.75 286.47 L540.64 286.51 L540.52 286.56 L540.41 286.60 L540.29 286.64 L540.18 286.67 L540.06 286.71 L539.94 286.74 L539.82 286.77 L539.70 286.80 L539.65 287.13 L539.61 287.57 L539.55 288.01 L539.48 288.45 L539.34 288.50 L539.19 288.52 L539.04 288.54 L538.89 288.56 L538.75 288.57 L538.60 288.58 L538.45 288.59 L538.30 288.60 L538.15 288.60 L538.00 288.60 L537.85 288.60 L537.70 288.60 L537.55 288.59 L537.40 288.58 L537.25 288.57 L537.11 288.56 L536.96 288.54 L536.81 288.52 L536.66 288.50 L536.52 288.45 L536.45 288.01 L536.39 287.57 L536.35 287.13 L536.30 286.80 L536.18 286.77 L536.06 286.74 L535.94 286.71 L535.82 286.67 L535.71 286.64 L535.59 286.60 L535.48 286.56 L535.36 286.51 L535.25 286.47 L535.13 286.42 L535.02 286.37 L534.91 286.32 L534.80 286.27 L534.69 286.22 L534.58 286.16 L534.47 286.10 L534.36 286.04 L534.26 285.98 L534.15 285.92 L533.96 285.99 L533.63 286.27 L533.28 286.55 L532.92 286.81 L532.70 286.87 L532.58 286.78 L532.46 286.69 L532.34 286.60 L532.23 286.50 L532.11 286.41 L532.00 286.31 L531.89 286.21 L531.78 286.11 L531.68 286.00 L531.57 285.90 L531.47 285.79 L531.36 285.68 L531.26 285.57 L531.17 285.46 L531.07 285.34 L530.98 285.23 L530.88 285.11 L530.79 284.99 L530.71 284.87 L530.86 284.58 L531.12 284.23 L531.40 283.88 L531.69 283.55 L531.66 283.42 L531.60 283.32 L531.54 283.21 L531.48 283.10 L531.42 282.99 L531.37 282.88 L531.32 282.77 L531.26 282.66 L531.21 282.55 L531.17 282.44 L531.12 282.32 L531.08 282.21 L531.03 282.09 L530.99 281.98 L530.95 281.86 L530.92 281.75 L530.88 281.63 L530.85 281.51 L530.82 281.39 L530.79 281.27 L530.35 281.24 L529.91 281.19 L529.47 281.13 L529.12 281.05 L529.09 280.90 L529.07 280.75 L529.06 280.60 L529.04 280.45 L529.03 280.31 L529.02 280.16 L529.01 280.01 L529.00 279.86 L529.00 279.71 L529.00 279.56 L529.00 279.41 L529.01 279.26 L529.01 279.11 L529.02 278.96 L529.03 278.82" stroke-width="1.2"/><circle cx="538.0" cy="278.0" r="6" fill="#fff" stroke-width="1.2"/><circle cx="538.0" cy="278.0" r="3.8" fill="#c9d8f7" stroke-width="1"/><path d="M537.1 276.20000000000005 L535.8 278.0 L537.1 279.8 M538.9 276.20000000000005 L540.2 278.0 L538.9 279.8" stroke-width="0.8"/>
<ellipse cx="611.8" cy="274.6" rx="6.8" ry="2.8"/><path d="M605 274.6 V286.6 Q605 288.6 611 288.8 M605 280.6 Q605 282.6 611.8 282.8 M618.6 274.6 V278.8"/>
<ellipse cx="617.6" cy="281.4" rx="4.4" ry="2" fill="#c9d8f7"/><path d="M613.2 281.4 V288.2 Q613.2 290.2 617.6 290.2 Q622 290.2 622 288.2 V281.4 M613.2 284.6 Q613.2 286.6 617.6 286.6 Q622 286.6 622 284.6"/>
</g>
</svg>
</body></html>
